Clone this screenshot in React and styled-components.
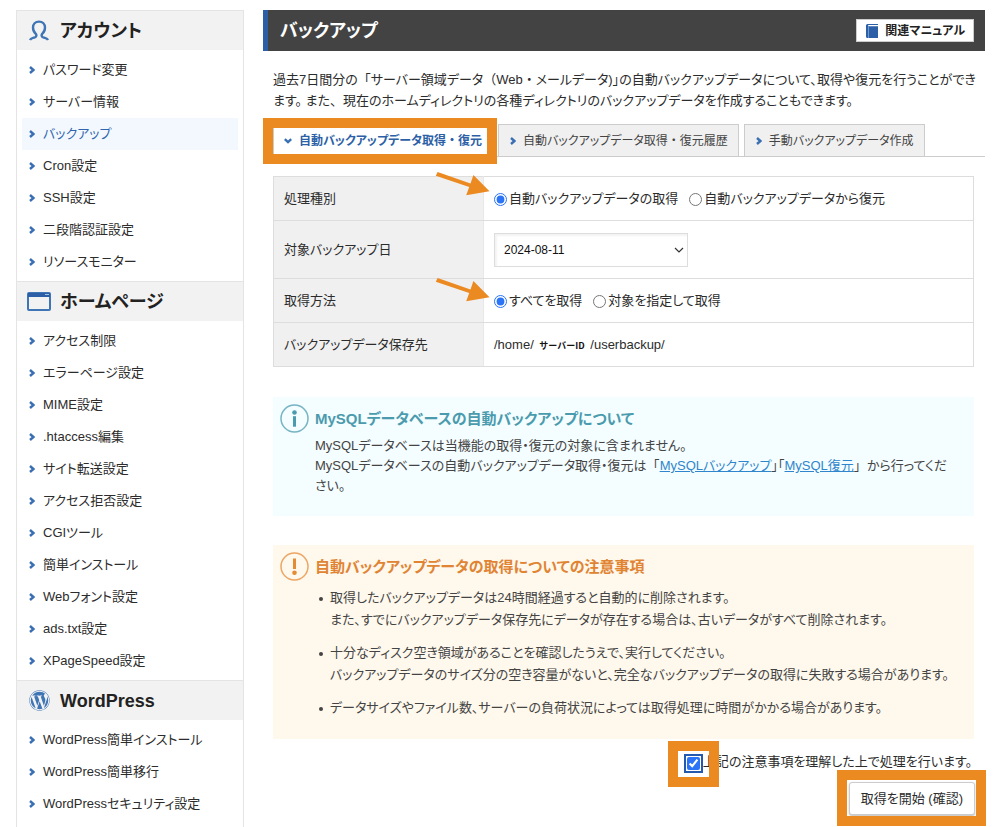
import React from "react";
import styled, { createGlobalStyle, css } from "styled-components";
import { FaWordpress } from "react-icons/fa";

const BLUE = "#2c5fa6";
const ORANGE = "#ec8a22";

const GlobalStyle = createGlobalStyle`
  *, *::before, *::after { box-sizing: border-box; }
  body {
    margin: 0;
    background: #fff;
    color: #2c2c2c;
    font-family: "Liberation Sans", "Noto Sans CJK JP", sans-serif;
    font-size: 13px;
    line-height: 20px;
    font-feature-settings: "palt";
  }
  h1, h2, h3, p, ul { margin: 0; padding: 0; }
  button, select, input { font: inherit; color: inherit; font-feature-settings: inherit; }
`;

const Page = styled.div`
  display: flex;
  gap: 19px;
  padding: 10px 15px 0 16px;
`;

/* Punctuation kept at its full em width */
const Wide = styled.span`
  font-feature-settings: normal;
`;

/* Sidebar */

const Sidebar = styled.nav`
  flex: 0 0 228px;
  border: solid #e4e4e4;
  border-width: 0 1px;
`;

const SideHeading = styled.h2`
  display: flex;
  align-items: center;
  height: 40px;
  padding-left: 9px;
  gap: 8px;
  border-top: 1px solid #e4e4e4;
  background: #f2f2f2;
  color: #222;
  font-size: 18px;
  line-height: 24px;
`;

const SideIcon = styled.span`
  display: flex;
  justify-content: center;
  width: 26px;
  color: #3f74b5;
`;

const SideList = styled.ul`
  list-style: none;
  padding: 4px 5px 3px;
`;

const SideLink = styled.a`
  display: flex;
  align-items: center;
  gap: 8px;
  height: 32px;
  padding-left: 7px;
  text-decoration: none;
  color: ${(p) => (p.$active ? "#2f66ad" : "#2c2c2c")};
  background: ${(p) => (p.$active ? "#f3f8ff" : "transparent")};
`;

/* Main column */

const Main = styled.main`
  flex: 1;
  min-width: 0;
`;

const TitleBar = styled.header`
  display: flex;
  align-items: center;
  justify-content: space-between;
  height: 41px;
  padding: 0 11px 0 12px;
  border-left: 5px solid ${BLUE};
  background: #434343;
`;

const Title = styled.h1`
  color: #fff;
  font-size: 18px;
  line-height: 24px;
`;

const ManualButton = styled.button`
  display: flex;
  align-items: center;
  gap: 7px;
  height: 23px;
  padding: 0 8px 0 9px;
  border: 1px solid #ccc;
  background: #fff;
  color: #222;
  font-weight: bold;
  font-size: 12px;
`;

const Lead = styled.p`
  padding: 18px 5px 0 10px;
  line-height: 21px;
`;

const Tabs = styled.div`
  display: flex;
  gap: 5px;
  margin-top: 13px;
  padding-left: 10px;
  border-bottom: 1px solid #ccc;
`;

const Tab = styled.button`
  position: relative;
  display: flex;
  align-items: center;
  gap: 7px;
  height: 32px;
  padding: 0 10px 0 11px;
  border: 1px solid #ccc;
  border-bottom: 0;
  background: #f0f0f0;
  color: #444;
  font-size: 12px;
  white-space: nowrap;
  ${(p) =>
    p.$active &&
    css`
      padding-left: 10px;
      background: #fff;
      color: ${BLUE};
      font-weight: bold;
    `}
`;

const Marker = styled.span`
  position: absolute;
  inset: ${(p) => p.$inset};
  border: 10px solid ${ORANGE};
  pointer-events: none;
`;

const Content = styled.div`
  padding: 19px 11px 0 10px;
`;

const Settings = styled.table`
  width: 100%;
  margin-bottom: 30px;
  border-collapse: collapse;
  border: 1px solid #ddd;
`;

const LabelCell = styled.th`
  width: 210px;
  padding: 10px;
  border: 1px solid #ddd;
  border-right-color: #e8e8e8;
  background: #f0f0f0;
  font-weight: normal;
  text-align: left;
`;

const ValueCell = styled.td`
  height: ${(p) => (p.$tall ? 58 : 44)}px;
  padding: 0 10px;
  border: 1px solid #ddd;
`;

const Options = styled.div`
  position: relative;
  display: flex;
  align-items: center;
  gap: 11px;
`;

const Option = styled.label`
  display: flex;
  align-items: center;
  gap: 2px;
`;

const Radio = styled.input`
  width: 13px;
  height: 13px;
  margin: 2px 0 0;
  accent-color: #2b74f5;
`;

const Pointer = styled.svg`
  position: absolute;
  left: -59px;
  top: ${(p) => p.$top}px;
  pointer-events: none;
`;

const SelectWrap = styled.div`
  position: relative;
  display: flex;
  align-items: center;
  width: 194px;
`;

const Select = styled.select`
  width: 100%;
  height: 34px;
  padding: 0 9px;
  border: 1px solid #ddd;
  border-radius: 0;
  background: #fff;
  box-shadow: inset 2px 2px 2px #f3f3f3;
  color: #111;
  font-size: 12px;
  appearance: none;
`;

const SelectArrow = styled.svg`
  position: absolute;
  right: 4px;
  pointer-events: none;
`;

const ServerId = styled.span`
  margin: 0 2px;
  font: bold 9px/12px "Noto Sans CJK JP", sans-serif;
  color: #111;
`;

const Notice = styled.section`
  display: flex;
  gap: 6px;
  margin-bottom: 29px;
  padding: 7px 12px 20px 7px;
  background: ${(p) => (p.$warn ? "#fff8ec" : "#f4fdff")};
  color: #444;

  &:last-child { margin-bottom: 0; }
`;

const NoticeIcon = styled.svg`
  flex: none;
  color: ${(p) => (p.$warn ? "#e58a35" : "#4b9bae")};
`;

const NoticeTitle = styled.h3`
  margin: 5px 0 7px;
  font-size: 15px;
  line-height: 20px;
  color: ${(p) => (p.$warn ? "#e08433" : "#4b9bae")};
`;

const TextLink = styled.a`
  color: #2f86cc;
  text-decoration: underline;
`;

const NoteList = styled.ul`
  display: flex;
  flex-direction: column;
  gap: 11px;
  margin-top: 10px;
  list-style: none;
`;

const Note = styled.li`
  display: flex;
  gap: 7px;
  padding-left: 4px;
  line-height: 22px;

  &::before {
    content: "";
    flex: none;
    width: 4px;
    height: 4px;
    margin-top: 10px;
    border-radius: 50%;
    background: #444;
  }
`;

const Actions = styled.div`
  display: flex;
  flex-direction: column;
  align-items: flex-end;
  gap: 10px;
  padding: 13px 10px 12px 0;
`;

const Agree = styled.label`
  display: flex;
  align-items: center;
  gap: 3px;
  padding-right: 3px;
`;

const CheckSlot = styled.span`
  position: relative;
  display: flex;
`;

const Check = styled.input`
  width: 13px;
  height: 13px;
  margin: 2px 0 0;
  accent-color: #2b74f5;
  border-radius: 2px;
  outline: 2px solid #2459b0;
  outline-offset: 1px;
`;

const SubmitSlot = styled.div`
  position: relative;
  display: flex;
`;

const Submit = styled.button`
  height: 33px;
  padding: 0 11px;
  border: 1px solid #ccc;
  border-radius: 3px;
  background: #fff;
  box-shadow: 0 1px 2px #bbb;
`;

/* Drawings */

const Chevron = ({ down }) => (
  <svg width={down ? 8 : 6} height="8" viewBox={down ? "0 0 8 8" : "0 0 6 8"} fill="none" stroke="#3b6fb3" strokeWidth="2.4" aria-hidden="true">
    <path d={down ? "M.8 2.2 4 5.2 7.2 2.2" : "M1 1 4.4 4 1 7"} />
  </svg>
);

const PersonIcon = () => (
  <svg width="20" height="22" viewBox="0 0 20 22" fill="none" stroke="currentColor" strokeWidth="2.4" strokeLinejoin="round" aria-hidden="true">
    <path d="M1 20c1-1.800 3-2 4.800-2.600 1.900-.7 1.900-2.300 1-3.600C5 12.200 4 10 4 7.500 4 4 6.300 1.600 10 1.600s6 2.400 6 5.900c0 2.500-1 4.700-2.800 6.300-.9 1.300-.9 2.900 1 3.600C16 18 18 18.200 19 20" />
  </svg>
);

const WindowIcon = () => (
  <svg width="24" height="19" viewBox="0 0 24 19" aria-hidden="true">
    <rect x="1" y="1" width="22" height="17" rx="1" fill="#f2f2f2" stroke="currentColor" strokeWidth="2" />
    <path d="M1 1h22v4H1z" fill={BLUE} />
    <path d="M18 2.500h4" stroke="#a9c3e2" />
  </svg>
);

const BookIcon = () => (
  <svg width="12" height="14" viewBox="0 0 12 14" aria-hidden="true">
    <path d="M1.500 0H12v1H2.200v1.200H12V14H1.500Q0 14 0 12.500v-11Q0 0 1.500 0z" fill={BLUE} />
    <path d="M2.500 2v12" stroke="#6f99cf" />
  </svg>
);

const Arrow = ({ top }) => (
  <Pointer $top={top} width="56" height="28" viewBox="0 0 56 28" aria-hidden="true">
    <path d="M2.600.1 35.500 11.400 38.400 3 54.500 19.200 31.200 23.200 34.200 15 .8 3.700z" fill={ORANGE} />
  </Pointer>
);

const InfoIcon = ({ warn }) => (
  <NoticeIcon $warn={warn} width="29" height="29" viewBox="0 0 29 29" aria-hidden="true">
    <circle cx="14.500" cy="14.500" r="13.500" fill="none" stroke="currentColor" strokeOpacity=".75" strokeWidth="1.500" />
    <circle cx="14.500" cy={warn ? 20.8 : 8.5} r="2.300" fill="currentColor" />
    <path d={warn ? "M13 6.500h3v10.500h-3z" : "M13 12.200h3v10.500h-3z"} fill="currentColor" />
  </NoticeIcon>
);

const sections = [
  {
    title: "アカウント",
    icon: <PersonIcon />,
    items: ["パスワード変更", "サーバー情報", "バックアップ", "Cron設定", "SSH設定", "二段階認証設定", "リソースモニター"],
  },
  {
    title: "ホームページ",
    icon: <WindowIcon />,
    items: ["アクセス制限", "エラーページ設定", "MIME設定", ".htaccess編集", "サイト転送設定", "アクセス拒否設定", "CGIツール", "簡単インストール", "Webフォント設定", "ads.txt設定", "XPageSpeed設定"],
  },
  {
    title: "WordPress",
    icon: <FaWordpress size={21} aria-hidden="true" />,
    items: ["WordPress簡単インストール", "WordPress簡単移行", "WordPressセキュリティ設定"],
  },
];

const RadioOption = ({ name, checked, children }) => (
  <Option>
    <Radio type="radio" name={name} defaultChecked={checked} />
    {children}
  </Option>
);

export default function App() {
  return (
    <>
      <GlobalStyle />
      <Page>
        <Sidebar>
          {sections.map((s) => (
            <section key={s.title}>
              <SideHeading>
                <SideIcon>{s.icon}</SideIcon>
                {s.title}
              </SideHeading>
              <SideList>
                {s.items.map((item) => (
                  <li key={item}>
                    <SideLink href="#" $active={item === "バックアップ"}>
                      <Chevron />
                      {item}
                    </SideLink>
                  </li>
                ))}
              </SideList>
            </section>
          ))}
        </Sidebar>

        <Main>
          <TitleBar>
            <Title>バックアップ</Title>
            <ManualButton type="button">
              <BookIcon />
              関連マニュアル
            </ManualButton>
          </TitleBar>
          <Lead>
            過去7日間分の<Wide>「</Wide>サーバー領域データ<Wide>（</Wide>Web<Wide>・</Wide>メールデータ)」の自動バックアップデータについて、取得や復元を行うことができ
            <br />
            ます。 また<Wide>、</Wide>現在のホームディレクトリの各種ディレクトリのバックアップデータを作成することもできます。
          </Lead>
          <Tabs>
            <Tab type="button" $active>
              <Chevron down />
              <span>自動バックアップデータ取得<Wide>・</Wide>復元</span>
              <Marker $inset="-7px -5px -8px -11px" />
            </Tab>
            <Tab type="button">
              <Chevron />
              <span>自動バックアップデータ取得<Wide>・</Wide>復元履歴</span>
            </Tab>
            <Tab type="button">
              <Chevron />
              手動バックアップデータ作成
            </Tab>
          </Tabs>

          <Content>
            <Settings>
              <tbody>
                <tr>
                  <LabelCell scope="row">処理種別</LabelCell>
                  <ValueCell>
                    <Options role="radiogroup" aria-label="処理種別">
                      <RadioOption name="kind" checked>自動バックアップデータの取得</RadioOption>
                      <RadioOption name="kind">自動バックアップデータから復元</RadioOption>
                      <Arrow top={-17} />
                    </Options>
                  </ValueCell>
                </tr>
                <tr>
                  <LabelCell scope="row">
                    <label htmlFor="date">対象バックアップ日</label>
                  </LabelCell>
                  <ValueCell $tall>
                    <SelectWrap>
                      <Select id="date">
                        <option>2024-08-11</option>
                      </Select>
                      <SelectArrow width="10" height="6" viewBox="0 0 10 6" fill="none" stroke="#333" strokeWidth="1.200" aria-hidden="true">
                        <path d="M1 1l4 4 4-4" />
                      </SelectArrow>
                    </SelectWrap>
                  </ValueCell>
                </tr>
                <tr>
                  <LabelCell scope="row">取得方法</LabelCell>
                  <ValueCell>
                    <Options role="radiogroup" aria-label="取得方法">
                      <RadioOption name="method" checked>すべてを取得</RadioOption>
                      <RadioOption name="method">対象を指定して取得</RadioOption>
                      <Arrow top={-13} />
                    </Options>
                  </ValueCell>
                </tr>
                <tr>
                  <LabelCell scope="row">バックアップデータ保存先</LabelCell>
                  <ValueCell>
                    /home/ <ServerId>サーバーID</ServerId> /userbackup/
                  </ValueCell>
                </tr>
              </tbody>
            </Settings>

            <Notice>
              <InfoIcon />
              <div>
                <NoticeTitle>MySQLデータベースの自動バックアップについて</NoticeTitle>
                <p>MySQLデータベースは当機能の取得・復元の対象に含まれません。</p>
                <p>
                  MySQLデータベースの自動バックアップデータ取得・復元は<Wide>「</Wide>
                  <TextLink href="#">MySQLバックアップ</TextLink>」<Wide>「</Wide>
                  <TextLink href="#">MySQL復元</TextLink>
                  <Wide>」</Wide>から行ってくだ
                  <br />
                  さい。
                </p>
              </div>
            </Notice>

            <Notice $warn>
              <InfoIcon warn />
              <div>
                <NoticeTitle $warn>自動バックアップデータの取得についての注意事項</NoticeTitle>
                <NoteList>
                  <Note>
                    <div>
                      取得したバックアップデータは24時間経過すると自動的に削除されます。
                      <br />
                      また、すでにバックアップデータ保存先にデータが存在する場合は、古いデータがすべて削除されます。
                    </div>
                  </Note>
                  <Note>
                    <div>
                      十分なディスク空き領域があることを確認したうえで、実行してください。
                      <br />
                      バックアップデータのサイズ分の空き容量がないと、完全なバックアップデータの取得に失敗する場合があります。
                    </div>
                  </Note>
                  <Note>
                    <div>データサイズやファイル数、サーバーの負荷状況によっては取得処理に時間がかかる場合があります。</div>
                  </Note>
                </NoteList>
              </div>
            </Notice>
          </Content>

          <Actions>
            <Agree>
              <CheckSlot>
                <Check type="checkbox" defaultChecked />
                <Marker $inset="-14px -19px -17px -19px" />
              </CheckSlot>
              上記の注意事項を理解した上で処理を行います。
            </Agree>
            <SubmitSlot>
              <Submit type="button">取得を開始 (確認)</Submit>
              <Marker $inset="-12px -11px -11px -12px" />
            </SubmitSlot>
          </Actions>
        </Main>
      </Page>
    </>
  );
}
